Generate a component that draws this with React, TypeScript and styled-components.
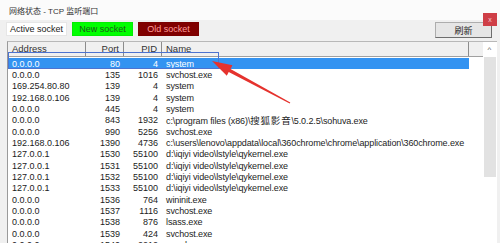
import { FC } from "react";
import styled, { createGlobalStyle } from "styled-components";

const GlobalStyle = createGlobalStyle`
html, body{
  margin: 0;
  padding: 0;
  overflow: hidden;
  background: #f0f0f0;
}
`

const WindowStyled = styled.div`
position: relative;
width: 500px;
height: 243px;
display: flex;
flex-direction: column;
background: #f0f0f0;
font-family: "Liberation Sans", "Noto Sans CJK SC", sans-serif;
color: #1c1c1c;
overflow: hidden;
`
const TitleBar = styled.div`
height: 20px;
flex: none;
display: flex;
align-items: center;
padding-left: 9px;
background: #fbfbfb;
font-size: 8px;
color: #333;
`
const CloseButton = styled.div`
position: absolute;
top: 13px;
left: 483px;
width: 14px;
height: 13px;
background: #cf3f47;
color: #f4c9cb;
font-size: 7px;
display: flex;
align-items: center;
justify-content: center;
`
const Toolbar = styled.div`
height: 21px;
flex: none;
display: flex;
align-items: flex-start;
gap: 5px;
padding: 2px 8px 0 6px;
box-sizing: border-box;
`
const SocketButton = styled.div<{bg:string, fg:string, edge:string}>`
width: 61px;
height: 14px;
box-sizing: border-box;
border: 1px solid ${({edge})=>edge};
background: ${({bg})=>bg};
color: ${({fg})=>fg};
font-size: 9px;
display: flex;
align-items: center;
justify-content: center;
`
const RefreshButton = styled.div`
margin-left: auto;
width: 57px;
height: 16px;
box-sizing: border-box;
border: 1px solid #adadad;
border-right-color: #6e6e6e;
border-bottom-color: #6e6e6e;
background: #e6e6e6;
font-size: 9px;
display: flex;
align-items: center;
justify-content: center;
`
const ListFrame = styled.div`
flex: 1;
display: flex;
margin-left: 7px;
margin-right: 3px;
border-left: 1px solid #9a9a9a;
border-top: 1px solid #b8b8b8;
background: #fff;
min-height: 0;
`
const ListArea = styled.div`
width: 475px;
display: flex;
flex-direction: column;
`
const HeaderRow = styled.div`
height: 15px;
flex: none;
display: flex;
box-sizing: border-box;
border-bottom: 1px solid #a0a0a0;
background: #f0f0f0;
`
const Cell = styled.div<{w?:number, right?:boolean}>`
${({w})=>w ? `width:${w}px; flex:none;` : "flex:1;"}
box-sizing: border-box;
padding: 0 4px;
text-align: ${({right})=>right ? "right" : "left"};
white-space: nowrap;
overflow: hidden;
`
const NameText = styled(Cell)`
letter-spacing: -0.12px;
overflow: visible;
`
const HeaderCell = styled(Cell)`
font-size: 9.5px;
line-height: 14px;
border-right: 1px solid #8c8c8c;
color: #333;
`
const HeaderFill = styled.div`
flex: 1;
`
const Body = styled.div`
padding-top: 1px;
overflow: hidden;
`
const Row = styled.div<{selected?:boolean}>`
width: 461px;
height: 11.35px;
display: flex;
align-items: center;
font-size: 9px;
background: ${({selected})=>selected ? "#3393f1" : "transparent"};
color: ${({selected})=>selected ? "#fff" : "#1c1c1c"};
`
const Cjk = styled.span`
font-family: "Noto Sans CJK SC", sans-serif;
font-size: 9.5px;
letter-spacing: 0.8px;
`
const ScrollBar = styled.div`
flex: 1;
display: flex;
flex-direction: column;
align-items: center;
padding-right: 1px;
`
const ArrowUp = styled.div`
height: 14px;
font-size: 8px;
color: #555;
display: flex;
align-items: center;
`
const Thumb = styled.div`
width: 12px;
height: 120px;
margin-top: 1px;
background: #e2e2e2;
`
const Overlay = styled.svg`
position: absolute;
left: 0;
top: 0;
pointer-events: none;
`

type RowData = [string, string, string, string]
const PATH_360 = "c:\\users\\lenovo\\appdata\\local\\360chrome\\chrome\\application\\360chrome.exe"
const QY = "d:\\iqiyi video\\lstyle\\qykernel.exe"
const rows:RowData[] = [
  ["0.0.0.0","80","4","system"],
  ["0.0.0.0","135","1016","svchost.exe"],
  ["169.254.80.80","139","4","system"],
  ["192.168.0.106","139","4","system"],
  ["0.0.0.0","445","4","system"],
  ["0.0.0.0","843","1932","sohu"],
  ["0.0.0.0","990","5256","svchost.exe"],
  ["192.168.0.106","1390","4736",PATH_360],
  ["127.0.0.1","1530","55100",QY],
  ["127.0.0.1","1531","55100",QY],
  ["127.0.0.1","1532","55100",QY],
  ["127.0.0.1","1533","55100",QY],
  ["0.0.0.0","1536","764","wininit.exe"],
  ["0.0.0.0","1537","1116","svchost.exe"],
  ["0.0.0.0","1538","876","lsass.exe"],
  ["0.0.0.0","1539","424","svchost.exe"],
  ["0.0.0.0","1540","2212","spoolsv.exe"],
]

const NameCell:FC<{name:string}> = ({name})=>{
  if(name==="sohu") return <>c:\program files (x86)\<Cjk>搜狐影音</Cjk>\5.0.2.5\sohuva.exe</>
  return <>{name}</>
}

export default function App(){
  return(
    <WindowStyled>
      <GlobalStyle/>
      <TitleBar>网络状态 - TCP 监听端口</TitleBar>
      <CloseButton>x</CloseButton>
      <Toolbar>
        <SocketButton bg="#ffffff" fg="#222" edge="#e6e6e6">Active socket</SocketButton>
        <SocketButton bg="#00ff00" fg="#1a5a1a" edge="#00ee00">New socket</SocketButton>
        <SocketButton bg="#800000" fg="#ff9a9a" edge="#7a0000">Old socket</SocketButton>
        <RefreshButton>刷新</RefreshButton>
      </Toolbar>
      <ListFrame>
        <ListArea>
          <HeaderRow>
            <HeaderCell w={78}>Address</HeaderCell>
            <HeaderCell w={38} right>Port</HeaderCell>
            <HeaderCell w={38} right>PID</HeaderCell>
            <HeaderCell w={307}>Name</HeaderCell>
            <HeaderFill/>
          </HeaderRow>
          <Body>
            {rows.map((r, i)=>(
              <Row key={i} selected={i===0}>
                <Cell w={78}>{r[0]}</Cell>
                <Cell w={38} right>{r[1]}</Cell>
                <Cell w={38} right>{r[2]}</Cell>
                <NameText><NameCell name={r[3]}/></NameText>
              </Row>
            ))}
          </Body>
        </ListArea>
        <ScrollBar>
          <ArrowUp>^</ArrowUp>
          <Thumb/>
        </ScrollBar>
      </ListFrame>
      <Overlay width="500" height="243" viewBox="0 0 500 243">
        <rect x="8.5" y="52.5" width="210" height="16" fill="none" stroke="#4d73cf" strokeWidth="1"/>
        <polygon fill="#e5322d" points="212,61 232.4,65.2 230.5,68.9 290.3,102.4 289.7,103.6 228.7,72.1 226.8,75.8"/>
      </Overlay>
    </WindowStyled>
  )
}
